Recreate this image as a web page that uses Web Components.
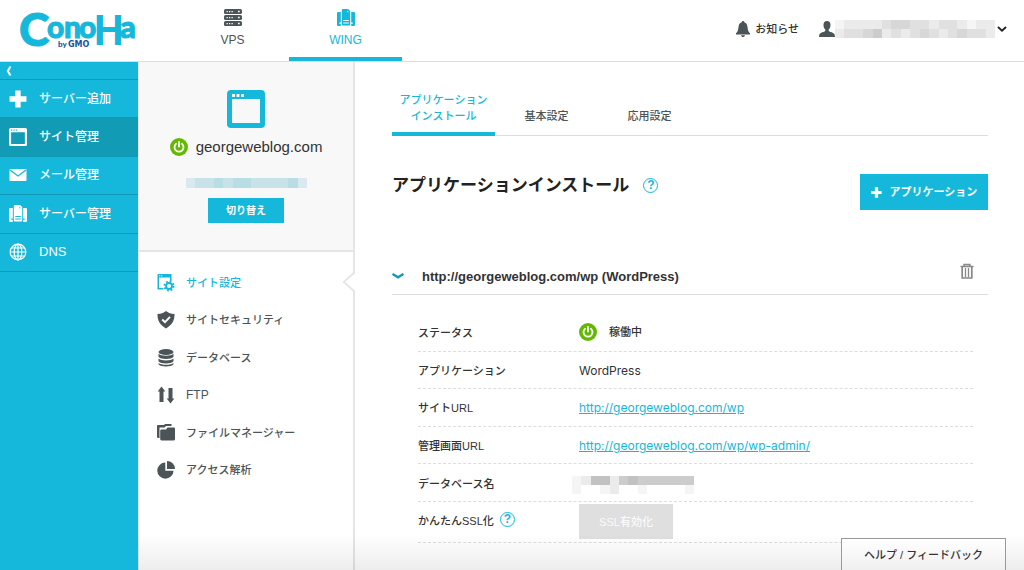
<!DOCTYPE html>
<html lang="ja">
<head>
<meta charset="utf-8">
<meta name="viewport" content="width=device-width, initial-scale=1">
<title>ConoHa WING - サイト管理</title>
<style>
:root {
  --brand: #15b8da;
  --brand-dark: #119bb5;
  --brand-line: #1099b6;
  --ink: #333;
  --slate: #4b5558;
  --line: #ddd;
}
body {
  margin: 0;
  color: var(--ink);
  background: #fff;
  font: 11px/16px "Liberation Sans", "Noto Sans CJK JP", sans-serif;
}
</style>
</head>
<body>
<control-panel></control-panel>
<script>
const ICONS = {
  vps: ['0 0 18 18', '<g fill="currentColor"><rect x="0" y="0" width="18" height="5" rx="1.6"/><rect x="0" y="6" width="18" height="5" rx="1.6"/><rect x="0" y="12" width="18" height="5" rx="1.6"/></g><g fill="#fff"><path d="M2.5 2h1.3v1.2H2.500zM5 2h1.300v1.200H5zM7.500 2h1.300v1.200H7.500zM14 1.800h1.700v1.500H14zM2.500 8h1.300v1.200H2.500zM5 8h1.300v1.200H5zM7.500 8h1.300v1.200H7.500zM14 7.800h1.700v1.500H14zM2.500 14h1.300v1.200H2.500zM5 14h1.300v1.200H5zM7.500 14h1.300v1.200H7.500zM14 13.800h1.700v1.500H14z"/></g>'],
  wing: ['0 0 18 18', '<path fill="currentColor" fill-rule="evenodd" d="M6.500 0h4.500L13.200 2v13.500a1 1 0 0 1-1 1H5.800a1 1 0 0 1-1-1v-14A1.500 1.500 0 0 1 6.500 0zM10.300 1.500v1.700h1.500zM6.200 11v1.100h5.600V11zM6.200 13.400v1.200h5.600v-1.200z"/><path fill="currentColor" d="M1.200 3H3.800v10.500H2.300v1.200h1.500V17H1.200A1.200 1.200 0 0 1 0 15.800V4.200A1.200 1.200 0 0 1 1.200 3zM14.200 3h2.600A1.200 1.200 0 0 1 18 4.200v11.600a1.200 1.200 0 0 1-1.200 1.200h-2.600v-2.300h1.500v-1.200h-1.500z"/>'],
  bell: ['0 0 16 16', '<path fill="currentColor" d="M8 0c.9 0 1.300.6 1.300 1.300C11.500 2 12.300 3.800 12.500 6c.3 3.500 1 5 2.500 6.200V13.500H1v-1.300C2.500 11 3.200 9.500 3.500 6c.2-2.200 1-4 3.200-4.700C6.700.600 7.100 0 8 0zM6 14.200h4c-.2 1.100-1 1.800-2 1.800s-1.800-.7-2-1.800z"/>'],
  user: ['0 0 16 16', '<path fill="currentColor" d="M8 0c2.300 0 3.500 1.600 3.500 4 0 2.200-.8 3.800-1.800 4.600v1.300c.8 1 5.300 1.300 6 3.800l.3 2.300H0l.3-2.300c.7-2.500 5.200-2.800 6-3.800V8.600C5.300 7.800 4.500 6.200 4.500 4 4.500 1.600 5.700 0 8 0z"/>'],
  down: ['0 0 10 6', '<path fill="none" stroke="currentColor" stroke-width="1.800" d="M1 1l4 3.700L9 1"/>'],
  expand: ['0 0 12 6', '<path fill="none" stroke="currentColor" stroke-width="2.400" d="M.5 1L6 4.300 11.500 1"/>'],
  left: ['0 0 6 10', '<path fill="none" stroke="currentColor" stroke-width="2" d="M4.500.5L1.800 5l2.700 4.500"/>'],
  plus: ['0 0 17 17', '<path fill="currentColor" d="M6 .5h5V6h5.500v5H11v5.500H6V11H.5V6H6z"/>'],
  window: ['0 0 17 17', '<path fill="currentColor" fill-rule="evenodd" d="M1.500 0h14A1.500 1.500 0 0 1 17 1.500v14a1.500 1.500 0 0 1-1.500 1.500h-14A1.500 1.500 0 0 1 0 15.500v-14A1.500 1.500 0 0 1 1.500 0zM2 4v11h13V4zM2 1.500v1h1v-1zM4.200 1.500v1h1v-1zM6.400 1.500v1h1v-1z"/>'],
  site: ['0 0 38 38', '<rect width="38" height="38" rx="4" fill="currentColor"/><path fill="#f8f8f8" d="M5 9h28v24H5zM5 4h3v3H5zM9.500 4h3v3h-3zM14 4h3v3h-3z"/>'],
  mail: ['0 0 17 12', '<rect width="17" height="12" rx="1" fill="currentColor"/><path fill="none" stroke="var(--brand)" stroke-width="1.300" d="M.5 1l8 6 8-6"/>'],
  globe: ['0 0 18 18', '<g fill="none" stroke="currentColor" stroke-width="1.200"><circle cx="9" cy="9" r="7.800"/><ellipse cx="9" cy="9" rx="3.800" ry="7.800"/><path d="M9 1v16M1 9h16M2.500 5h13M2.500 13h13"/></g>'],
  power: ['0 0 18 18', '<circle cx="9" cy="9" r="9" fill="#63b800"/><path fill="none" stroke="#fff" stroke-width="1.800" stroke-linecap="round" d="M6 5.800a4.500 4.500 0 1 0 6 0M9 4v4.500"/>'],
  setting: ['0 0 18 18', '<path fill="currentColor" fill-rule="evenodd" d="M1 0h13.500v7H13V3.500H2V14h4.500v1.500H.5V.5zM2.200 1.200v1h1v-1zM4.200 1.200v1h1v-1z"/><circle cx="12" cy="12" r="3" fill="none" stroke="currentColor" stroke-width="1.800"/><circle cx="12" cy="12" r="4.600" fill="none" stroke="currentColor" stroke-width="1.800" stroke-dasharray="1.800 1.813"/>'],
  shield: ['0 0 18 18', '<path fill="currentColor" d="M9 0c2.500 2 5 2.700 8.500 3 .2 6.500-2.300 10.800-8.500 14.500C2.800 13.800.3 9.500.5 3 4 2.700 6.500 2 9 0z"/><path fill="none" stroke="#fff" stroke-width="1.900" d="M5.200 8.500L8 11.200l5-5.400"/>'],
  database: ['0 0 18 18', '<g fill="currentColor"><ellipse cx="9" cy="3" rx="7.500" ry="3"/><path d="M1.500 4.800c2 2.500 13 2.500 15 0v3c-2 3-13 3-15 0zM1.500 9.500c2 2.500 13 2.500 15 0v2.800c-2 3-13 3-15 0zM1.500 14c2 2.400 13 2.400 15 0v1.200c-2 3-13 3-15 0z"/></g>'],
  transfer: ['0 0 18 18', '<path fill="currentColor" d="M4.500.5L8.300 5.500H6.500V16h-4V5.500H.7zM13.500 17.500L9.700 12.500h1.800V2h4v10.500h1.800z"/>'],
  folders: ['0 0 18 18', '<path fill="currentColor" d="M1 1h6l1-1h6.500v2H9L7.500 3.500H2.500V14H1.300A1.300 1.300 0 0 1 0 12.700V2a1 1 0 0 1 1-1zM4 5.500h5L10.500 3.500H17a1 1 0 0 1 1 1V15a1.500 1.500 0 0 1-1.500 1.500h-12A1.500 1.500 0 0 1 3.200 15V6.300z"/>'],
  pie: ['0 0 18 18', '<path fill="currentColor" d="M8.300 1.500v8.200h8.200A8.100 8.100 0 1 1 8.300 1.500zM10 0a8 8 0 0 1 8 8h-8z"/>'],
  trash: ['0 0 14 16', '<g fill="none" stroke="currentColor" stroke-width="1.700"><path d="M.5 3.500h13M4.200 3V1.500h5.600V3M2.200 4v11h9.600V4"/><path d="M5.500 5v9M8.500 5v9" stroke-width="1.300"/></g>']
};

function define(name, css, html) {
  const template = document.createElement('template');
  template.innerHTML = `<style>*{box-sizing:border-box}${css}</style>${html}`;
  customElements.define(name, class extends HTMLElement {
    constructor() {
      super();
      this.attachShadow({ mode: 'open' }).append(template.content.cloneNode(true));
    }
  });
}

customElements.define('ui-icon', class extends HTMLElement {
  connectedCallback() {
    const root = this.shadowRoot || this.attachShadow({ mode: 'open' });
    const [box, shapes] = ICONS[this.getAttribute('name')];
    root.innerHTML = `<style>:host{display:block;flex:none;width:18px;height:18px}svg{display:block;width:100%;height:100%}</style>
      <svg viewBox="${box}" aria-hidden="true">${shapes}</svg>`;
  }
});

/* Censored value: rows of cells, each cell a lightness from 0 (dark) to 9 (clear). */
customElements.define('masked-value', class extends HTMLElement {
  connectedCallback() {
    const root = this.shadowRoot || this.attachShadow({ mode: 'open' });
    const rows = this.getAttribute('cells').split(' ');
    const tint = this.getAttribute('tint') || '110,110,110';
    let cells = '';
    rows.forEach((row, y) => [...row].forEach((c, x) => {
      cells += `<rect x="${x}" y="${y}" width="1" height="1" fill="rgba(${tint},${(9 - c) * 0.07})"/>`;
    }));
    root.innerHTML = `<style>:host{display:block}svg{display:block;width:100%;height:100%}</style>
      <svg viewBox="0 0 ${rows[0].length} ${rows.length}" preserveAspectRatio="none" shape-rendering="crispEdges" aria-hidden="true">${cells}</svg>`;
  }
});

define('help-mark', `
  :host{display:inline-block}
  button{display:block;width:15px;height:15px;padding:0;border:1px solid var(--brand);border-radius:50%;background:none;color:var(--brand);font:bold 12px/13px "Liberation Sans",sans-serif;text-align:center}
`, `<button type="button" aria-label="ヘルプ">?</button>`);

define('brand-logo', `
  :host{display:block;flex:none;width:176px}
  a{display:block}
  svg{display:block;width:140px;height:61px;font-family:Lato,sans-serif;font-weight:900}
`, `<a href="#" aria-label="ConoHa by GMO"><svg viewBox="0 0 140 61">
  <text fill="var(--brand)" y="46"><tspan x="19" font-size="46" stroke="var(--brand)">C</tspan><tspan x="47 64 79" y="38" font-size="30" stroke="var(--brand)">ono</tspan><tspan x="94" y="45" font-size="42" font-family="Roboto" font-weight="700">H</tspan><tspan x="120" y="38" font-size="31" stroke="var(--brand)">a</tspan></text>
  <text fill="#1252a8" font-size="8" y="47" x="58">by</text>
  <text fill="#1252a8" font-family="DejaVu Sans" font-weight="700" font-size="8" y="47" x="68">GMO</text>
</svg></a>`);

define('app-header', `
  :host{display:flex;height:62px;border-bottom:1px solid var(--line)}
  nav{display:flex;flex:1}
  nav a{display:flex;flex-direction:column;align-items:center;width:113px;padding-top:9px;border-bottom:4px solid transparent;color:var(--slate);font-size:12px;line-height:16px;text-decoration:none;gap:5px}
  nav a[aria-current]{border-color:var(--brand);color:var(--brand)}
  .tools{display:flex;align-items:center;padding:0 17px 4px 0}
  button{display:flex;align-items:center;padding:0;border:0;background:none;color:var(--ink);font:inherit}
  .notice{gap:4px;margin-right:20px;font-weight:500}
  .tools ui-icon{width:16px;height:16px;color:var(--slate)}
  masked-value{width:160px;height:18px}
  .tools .arrow{width:10px;height:6px;margin-left:2px;color:#222}
`, `<brand-logo></brand-logo>
<nav aria-label="サービス">
  <a href="#"><ui-icon name="vps"></ui-icon>VPS</a>
  <a href="#" aria-current="page"><ui-icon name="wing"></ui-icon>WING</a>
</nav>
<div class="tools">
  <button class="notice" type="button"><ui-icon name="bell"></ui-icon>お知らせ</button>
  <button type="button" aria-label="アカウント"><ui-icon name="user"></ui-icon><masked-value cells="87777655667667877 76654767656765667"></masked-value><ui-icon class="arrow" name="down"></ui-icon></button>
</div>`);

define('side-nav', `
  :host{display:block;flex:none;width:138px;background:var(--brand);color:#fff}
  button{display:flex;align-items:center;width:100%;height:18px;padding:0 6px;border:0;border-bottom:1px solid var(--brand-line);background:none;color:inherit}
  button ui-icon{width:6px;height:10px}
  ul{display:grid;grid-auto-rows:1fr;min-height:192px;margin:0;padding:0;list-style:none}
  li{display:flex;border-bottom:1px solid var(--brand-line)}
  a{display:flex;flex:1;align-items:center;gap:12px;padding-left:9px;color:inherit;font-size:12px;font-weight:500;text-decoration:none}
  a[aria-current]{background:var(--brand-dark)}
  .en{font-size:13px}
  a ui-icon{width:18px}
  [name=mail]{height:12px}
`, `<button type="button" aria-label="メニューを閉じる"><ui-icon name="left"></ui-icon></button>
<ul>
  <li><a href="#"><ui-icon name="plus"></ui-icon>サーバー追加</a></li>
  <li><a href="#" aria-current="page"><ui-icon name="window"></ui-icon>サイト管理</a></li>
  <li><a href="#"><ui-icon name="mail"></ui-icon>メール管理</a></li>
  <li><a href="#"><ui-icon name="wing"></ui-icon>サーバー管理</a></li>
  <li><a href="#" class="en"><ui-icon name="globe"></ui-icon>DNS</a></li>
</ul>`);

define('site-panel', `
  :host{display:block;flex:none;width:217px;border-left:1px solid #e5e5e5;border-right:2px solid #e5e5e5}
  .card{display:flex;flex-direction:column;align-items:center;height:190px;padding-top:28px;border-bottom:2px solid #e5e5e5;background:#f8f8f8}
  .card [name=site]{width:38px;height:38px;color:var(--brand)}
  .name{display:flex;align-items:center;gap:8px;margin:9px 0 21px;font:15px/20px "Liberation Sans",sans-serif}
  masked-value{width:121px;height:10px;margin-bottom:10px}
  button{width:76px;height:25px;padding:0;border:0;background:var(--brand);color:#fff;font:bold 10px/16px "Liberation Sans","Noto Sans CJK JP",sans-serif}
  ul{display:grid;grid-auto-rows:1fr;min-height:225px;margin:12px 0 0;padding:0;list-style:none}
  li{display:flex;position:relative}
  a{display:flex;flex:1;align-items:center;gap:11px;padding-left:18px;color:var(--slate);font-weight:500;text-decoration:none}
  .en{font-size:12px}
  a[aria-current]{color:var(--brand)}
  .notch{position:absolute;right:-2px;top:8px;width:13px;height:20px}
`, `<section class="card">
  <ui-icon name="site"></ui-icon>
  <div class="name"><ui-icon name="power"></ui-icon>georgeweblog.com</div>
  <masked-value tint="20,150,175" cells="7665655666657"></masked-value>
  <button type="button">切り替え</button>
</section>
<ul>
  <li><a href="#" aria-current="page"><ui-icon name="setting"></ui-icon>サイト設定</a>
    <svg class="notch" viewBox="0 0 13 20" aria-hidden="true"><path d="M12 1L2 10l10 9" fill="none" stroke="#e5e5e5" stroke-width="2"/><path d="M13 1.500L3.400 10 13 18.500z" fill="#fff"/></svg></li>
  <li><a href="#"><ui-icon name="shield"></ui-icon>サイトセキュリティ</a></li>
  <li><a href="#"><ui-icon name="database"></ui-icon>データベース</a></li>
  <li><a href="#" class="en"><ui-icon name="transfer"></ui-icon>FTP</a></li>
  <li><a href="#"><ui-icon name="folders"></ui-icon>ファイルマネージャー</a></li>
  <li><a href="#"><ui-icon name="pie"></ui-icon>アクセス解析</a></li>
</ul>`);

define('tab-bar', `
  :host{display:flex;height:55px;border-bottom:1px solid var(--line)}
  a{display:flex;align-items:flex-end;justify-content:center;width:103px;height:55px;padding-bottom:8px;border-bottom:4px solid transparent;color:var(--slate);font-weight:500;text-align:center;text-decoration:none}
  a[aria-current]{border-color:var(--brand);color:var(--brand)}
`, `<a href="#" aria-current="page">アプリケーション<br>インストール</a><a href="#">基本設定</a><a href="#">応用設定</a>`);

define('app-details', `
  :host{display:block}
  header{display:flex;align-items:center;height:37px;padding-right:14px;border-bottom:1px solid var(--line)}
  header button{padding:0;border:0;background:none}
  [name=expand]{width:12px;height:6px;color:#119bb5}
  [name=trash]{width:14px;height:16px;color:#888}
  h2{flex:1;margin:0 0 0 18px;padding-top:2px;font:bold 13px/16px "Liberation Sans",sans-serif}
  .trash{margin-bottom:10px}
  dl{display:grid;grid-template-rows:repeat(5,1fr) 41px;min-height:229px;margin:19px 15px 0 26px}
  dl div{display:flex;align-items:center;border-bottom:1px dashed #ddd}
  dt{display:flex;align-items:center;gap:6px;flex:none;width:161px;padding-top:2px;font-weight:500}
  dl div:last-child dt{padding:0 0 2px}
  help-mark{margin-bottom:3px}
  dd{display:flex;align-items:center;gap:12px;margin:0;font-weight:500}
  .en{padding-top:2px;font:12px/16px Inter,sans-serif}
  a{color:var(--brand)}
  masked-value{width:122px;height:18px;margin:4px 0 0 -7px}
  dd button{width:94px;height:35px;padding:0;border:0;background:#dfdfdf;color:#fafafa;font:inherit}
`, `<header>
  <button type="button" aria-label="折りたたむ"><ui-icon name="expand"></ui-icon></button>
  <h2>http://georgeweblog.com/wp (WordPress)</h2>
  <button class="trash" type="button" aria-label="削除"><ui-icon name="trash"></ui-icon></button>
</header>
<dl>
  <div><dt>ステータス</dt><dd><ui-icon name="power"></ui-icon>稼働中</dd></div>
  <div><dt>アプリケーション</dt><dd class="en">WordPress</dd></div>
  <div><dt>サイトURL</dt><dd class="en"><a href="#">http://georgeweblog.com/wp</a></dd></div>
  <div><dt>管理画面URL</dt><dd class="en"><a href="#">http://georgeweblog.com/wp/wp-admin/</a></dd></div>
  <div><dt>データベース名</dt><dd><masked-value cells="8733743444444 8998799899998"></masked-value></dd></div>
  <div><dt>かんたんSSL化<help-mark></help-mark></dt><dd><button type="button" disabled>SSL有効化</button></dd></div>
</dl>`);

define('control-panel', `
  :host{display:flex;flex-direction:column;min-height:100vh}
  .body{display:flex;flex:1}
  main{flex:1;min-width:0;padding:19px 36px 0 37px}
  .title{display:flex;align-items:flex-start;height:36px;margin:38px 0 48px}
  h1{margin:0 14px 0 0;color:#222;font:bold 17px/24px "Liberation Sans","Noto Sans CJK JP",sans-serif}
  .add{display:flex;align-items:center;justify-content:center;gap:8px;width:128px;height:36px;margin-left:auto;padding:0;border:0;background:var(--brand);color:#fff;font:bold 11px/16px "Liberation Sans","Noto Sans CJK JP",sans-serif}
  .add ui-icon{width:11px;height:11px}
  .title help-mark{margin:4px auto 0 0}
  .fade{position:fixed;left:138px;right:0;bottom:0;height:36px;background:linear-gradient(transparent,rgba(0,0,0,.07));pointer-events:none}
  .help{position:fixed;right:18px;bottom:0;width:165px;height:32px;padding:0;border:1px solid #999;border-bottom:0;background:linear-gradient(#fff,#f0f0f0);color:var(--ink);font:500 11px/16px "Liberation Sans","Noto Sans CJK JP",sans-serif}
`, `<app-header></app-header>
<div class="body">
  <side-nav></side-nav>
  <site-panel></site-panel>
  <main>
    <tab-bar></tab-bar>
    <div class="title"><h1>アプリケーションインストール</h1><help-mark></help-mark><button class="add" type="button"><ui-icon name="plus"></ui-icon>アプリケーション</button></div>
    <app-details></app-details>
  </main>
</div>
<div class="fade"></div>
<button class="help" type="button">ヘルプ / フィードバック</button>`);
</script>
</body>
</html>
